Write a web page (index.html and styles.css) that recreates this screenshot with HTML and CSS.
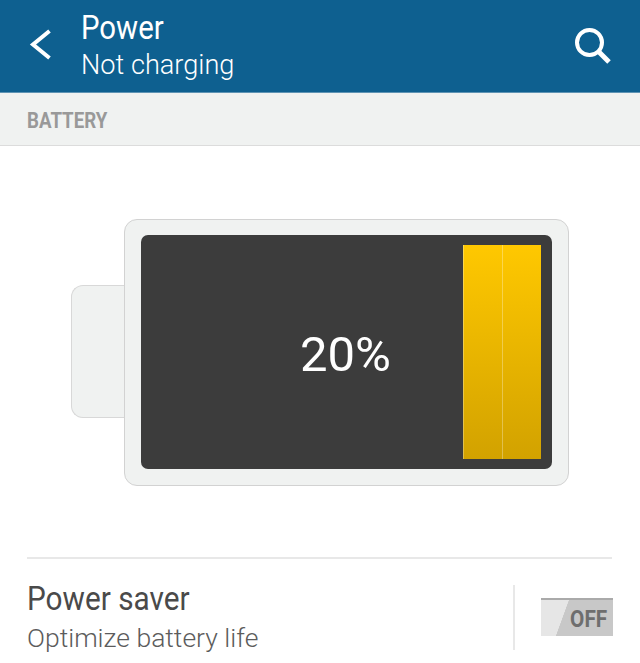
FILE: index.html
```html
<!DOCTYPE html>
<html lang="en" dir="ltr">
  <head>
    <meta charset="utf-8">
    <title>Power</title>
    <link rel="stylesheet" href="styles.css">
  </head>
  <body>
    <div class="header">
      <svg class="back" width="26" height="36" viewBox="0 0 26 36">
        <path d="M22.500 3 L6 16.500 L22.500 30" fill="none" stroke="#fff" stroke-width="4"/>
      </svg>
      <div class="titles">
        <div class="title">Power</div>
        <div class="subtitle">Not charging</div>
      </div>
      <svg class="search" width="38" height="38" viewBox="0 0 38 38">
        <circle cx="15.500" cy="15.500" r="12.500" fill="none" stroke="#fff" stroke-width="4"/>
        <path d="M24 24 L35 35" fill="none" stroke="#fff" stroke-width="5"/>
      </svg>
    </div>
    <div class="section"><span class="section-label">BATTERY</span></div>
    <div class="battery">
      <div class="tip"></div>
      <div class="case">
        <div class="screen">
          <div class="level">20%</div>
          <div class="fill"><div class="cell"></div><div class="cell"></div></div>
        </div>
      </div>
    </div>
    <div class="row">
      <div class="row-text">
        <div class="row-title">Power saver</div>
        <div class="row-sub">Optimize battery life</div>
      </div>
      <div class="row-switch">
        <div class="toggle"><span class="toggle-label">OFF</span></div>
      </div>
    </div>
  </body>
</html>
```

FILE: styles.css
```css
* {
  margin: 0;
  padding: 0;
  box-sizing: border-box;
}
body {
  width: 640px;
  height: 663px;
  overflow: hidden;
  background: #fff;
  font-family: Roboto, "Liberation Sans", sans-serif;
}
.header {
  height: 93px;
  background: #0e6090;
  border-bottom: 1px solid #5f94b4;
  display: flex;
  align-items: center;
  color: #fff;
}
.back {
  margin-left: 27px;
  flex: none;
}
.titles {
  margin-left: 28px;
  flex: 1;
}
.title {
  font-size: 33px;
  line-height: 36px;
  transform: scaleX(0.89);
  transform-origin: left;
}
.subtitle {
  margin-top: 1px;
  font-size: 28px;
  font-weight: 300;
  line-height: 36px;
  transform: scaleX(0.97);
  transform-origin: left;
}
.search {
  margin-right: 28px;
  flex: none;
}
.section {
  height: 53px;
  padding: 14px 0 0 27px;
  background: #f0f2f1;
  border-bottom: 1px solid #dcdcdc;
  color: #999;
  font-size: 22px;
  font-weight: 700;
  line-height: 27px;
}
.section-label {
  display: inline-block;
  transform: scaleX(0.85);
  transform-origin: left;
}
.battery {
  display: flex;
  align-items: center;
  padding: 73px 0 0 71px;
}
.tip {
  width: 53px;
  height: 133px;
  margin-bottom: 2px;
  background: #f0f2f1;
  border: 1px solid #d8d8d8;
  border-right: 0;
  border-radius: 12px 0 0 12px;
}
.case {
  width: 445px;
  height: 267px;
  padding: 15px;
  background: #f0f2f1;
  border: 1px solid #d2d2d2;
  border-radius: 13px;
}
.screen {
  height: 234px;
  margin: 0 1px;
  padding: 10px 11px 10px 0;
  display: flex;
  background: #3c3c3c;
  border-radius: 7px;
}
.level {
  flex: 1;
  padding-left: 87px;
  text-align: center;
  color: #fff;
  font-size: 49px;
  line-height: 220px;
}
.fill {
  width: 78px;
  display: flex;
  background: linear-gradient(#ffc800, #d2a200);
}
.cell {
  flex: 1;
  border-left: 1px solid rgba(255, 255, 255, 0.3);
}
.row {
  margin: 71px 28px 0 27px;
  border-top: 2px solid #e8e8e8;
  display: flex;
  align-items: flex-start;
}
.row-text {
  flex: 1;
  padding-top: 19px;
}
.row-title {
  color: #4a4a4a;
  font-size: 34px;
  line-height: 40px;
  transform: scaleX(0.875);
  transform-origin: left;
}
.row-sub {
  margin-top: 3px;
  color: #5c5c5c;
  font-size: 26.500px;
  font-weight: 300;
  line-height: 34px;
}
.row-switch {
  margin-top: 26px;
  width: 99px;
  height: 65px;
  padding: 13px 0 0 26px;
  border-left: 2px solid #e8e8e8;
}
.toggle {
  width: 72px;
  height: 38px;
  border-top: 2px solid #aaa;
  background: linear-gradient(110deg, #e6e6e6 0, #e6e6e6 26px, #c8c8c8 26.500px);
  color: #6e6e6e;
  font-size: 23px;
  font-weight: 700;
  line-height: 39px;
  text-align: right;
  padding-right: 6px;
}
.toggle-label {
  display: inline-block;
  transform: scaleX(0.9);
  transform-origin: right;
}
```
